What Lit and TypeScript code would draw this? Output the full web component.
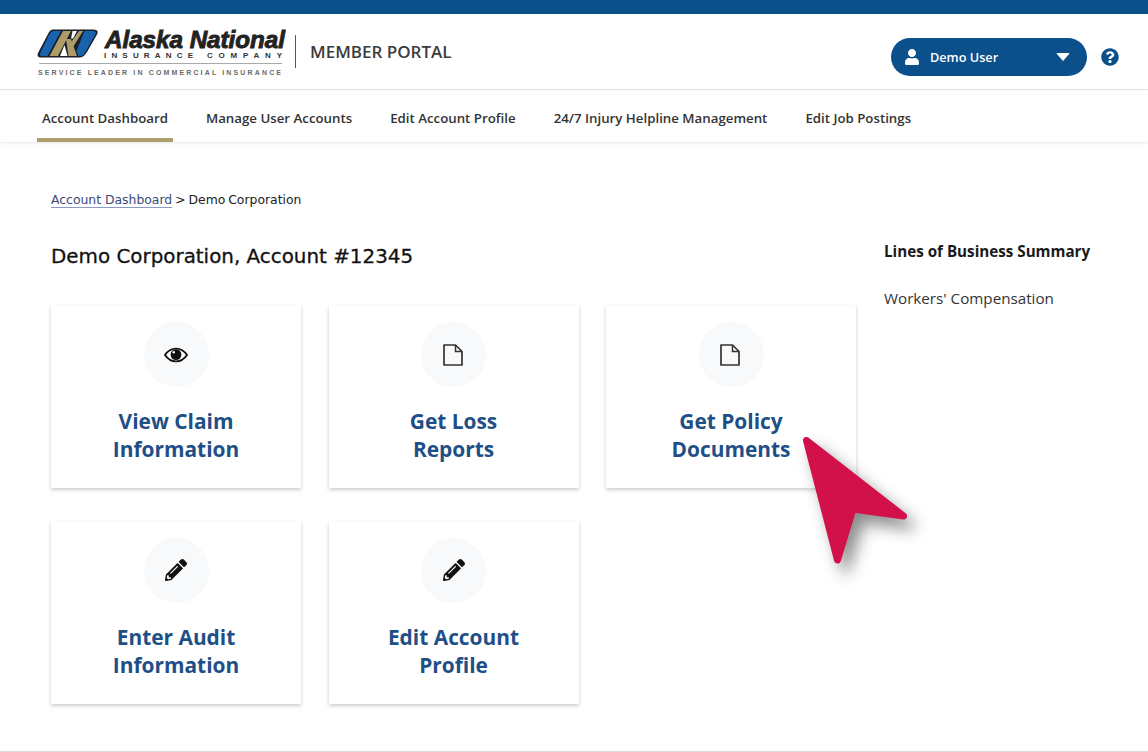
import { LitElement, html, css, svg } from "lit";
import { customElement } from "lit/decorators.js";

const pencil = svg`<path d="M497.9 142.1l-46.1 46.1c-4.7 4.7-12.3 4.7-17 0l-111-111c-4.7-4.7-4.7-12.3 0-17l46.1-46.1c18.7-18.7 49.1-18.7 67.9 0l60.1 60.1c18.8 18.7 18.8 49.1 0 67.9zM284.2 99.8L21.6 362.4.4 483.9c-2.9 16.4 11.4 30.6 27.8 27.8l121.5-21.3 262.6-262.6c4.7-4.7 4.7-12.3 0-17l-111-111c-4.8-4.7-12.4-4.7-17.1 0zM124.1 339.9c-5.5-5.5-5.5-14.3 0-19.8l154-154c5.5-5.5 14.3-5.5 19.8 0s5.5 14.3 0 19.8l-154 154c-5.5 5.5-14.3 5.5-19.8 0zM88 424h48v36.3l-64.5 11.3-31.1-31.1L51.7 376H88v48z" fill="#111"/>`;

const icons: Record<string, unknown> = {
  eye: html`<svg class="ic" width="24" height="16" viewBox="0 0 24 16">
    <path d="M1 8C4 3.6 7.8 1.6 12 1.6S20 3.6 23 8c-3 4.4-6.8 6.4-11 6.4S4 12.4 1 8Z" fill="#fff" stroke="#111" stroke-width="1.9"/>
    <circle cx="12" cy="7.6" r="5.4" fill="#111"/>
    <circle cx="9.8" cy="5.2" r="1.2" fill="#fff"/>
  </svg>`,
  doc: html`<svg class="ic doc" width="20" height="22" viewBox="0 0 20 22">
    <path d="M1 1h11.5L19 7.5V21H1Z" fill="none" stroke="#333" stroke-width="1.7" stroke-linejoin="round"/>
    <path d="M12.5 1v6.5H19" fill="none" stroke="#333" stroke-width="1.5"/>
  </svg>`,
  pencil: html`<svg class="ic" width="22" height="22" viewBox="0 0 512 512">${pencil}</svg>`,
};

const cards = [
  { icon: "eye", lines: ["View Claim", "Information"] },
  { icon: "doc", lines: ["Get Loss", "Reports"] },
  { icon: "doc", lines: ["Get Policy", "Documents"] },
  { icon: "pencil", lines: ["Enter Audit", "Information"] },
  { icon: "pencil", lines: ["Edit Account", "Profile"] },
];

const navItems = [
  "Account Dashboard",
  "Manage User Accounts",
  "Edit Account Profile",
  "24/7 Injury Helpline Management",
  "Edit Job Postings",
];

@customElement("app-root")
export class AppRoot extends LitElement {
  static styles = css`
    :host {
      display: block;
      position: relative;
      width: 1148px;
      height: 752px;
      overflow: hidden;
      background: #fff;
      font-family: "Open Sans", sans-serif;
      color: #222;
    }
    .page { height: 751px; border-bottom: 1px solid #dcdcdc; display: flex; flex-direction: column; }
    .topbar { height: 14px; background: #0b4f8b; flex: none; }
    .header {
      height: 75px; flex: none; display: flex; align-items: center;
      padding: 0 29px 0 37px; border-bottom: 1px solid #e9e9e9;
      box-shadow: 0 1px 2px rgba(0,0,0,.04);
    }
    .logo { display: block; flex: none; }
    .divider { width: 1px; height: 33px; background: #555; margin: 0 14px 0 9px; flex: none; }
    .portal { font-size: 17px; font-weight: 600; color: #3c3c3c; flex: 1; }
    .right { display: flex; align-items: center; padding-top: 10px; flex: none; }
    .user {
      width: 196px; height: 38px; border-radius: 19px; background: #0b4f8b; color: #fff;
      display: flex; align-items: center; padding: 0 17px 0 14px; box-sizing: border-box;
      font-size: 12.7px; font-weight: 600; margin-right: 14px;
    }
    .user .name { margin-left: 11px; flex: 1; }
    .help { display: block; flex: none; }
    .nav {
      height: 52px; flex: none; display: flex; gap: 28px; padding-left: 37px;
      box-shadow: 0 1px 3px rgba(0,0,0,.1); box-sizing: border-box;
    }
    .nav a {
      padding: 19px 5px 0; box-sizing: border-box; height: 52px; font-size: 13.28px; font-weight: 600; color: #333;
      white-space: nowrap; line-height: 18px; border-bottom: 4px solid transparent;
    }
    .nav a.on { border-bottom-color: #ae9f6f; }
    .main { flex: 1; display: flex; padding: 49px 0 0 51px; }
    .left { width: 805px; flex: none; }
    .crumb { font-family: "DejaVu Sans", sans-serif; font-size: 12.4px; line-height: 18px; color: #222; word-spacing: -1px; }
    .crumb a { color: #3b4a78; border-bottom: 1px solid #8d9ac0; word-spacing: 0; }
    h1 {
      margin: 34px 0 0; font-family: "DejaVu Sans", sans-serif; font-weight: 400; font-size: 19.9px;
      line-height: 28px; color: #111; -webkit-text-stroke: .3px #111;
    }
    .grid {
      display: grid; grid-template-columns: repeat(3, 250px); column-gap: 27.5px; row-gap: 32.5px; margin-top: 34px;
    }
    .card {
      height: 183px; box-sizing: border-box; background: #fff; padding-top: 17px;
      box-shadow: 0 2px 4px rgba(0,0,0,.2); display: flex; flex-direction: column; align-items: center;
    }
    .circle {
      width: 65px; height: 65px; border-radius: 50%; background: #f7f9fb;
      display: flex; align-items: center; justify-content: center; flex: none;
    }
    .ic { display: block; }
    .ic.doc { margin-right: 2px; }
    .title {
      margin-top: 20px; text-align: center; font-size: 20.9px; line-height: 28px; font-weight: 700; color: #1e4f86;
    }
    .side { padding: 50px 0 0 28px; width: 230px; }
    .side h2 { margin: 0; font-size: 15.2px; font-weight: 700; line-height: 20px; color: #1a1a1a; white-space: nowrap; }
    .side p { margin: 27px 0 0; font-size: 15.2px; line-height: 20px; color: #333; white-space: nowrap; }
    .cursor { position: absolute; left: 780px; top: 415px; pointer-events: none; overflow: visible; filter: drop-shadow(8px 10px 8px rgba(0,0,0,.45)); }
  `;

  render() {
    return html`
      <div class="page">
        <div class="topbar"></div>
        <header class="header">
          ${this.logo()}
          <div class="divider"></div>
          <div class="portal">MEMBER PORTAL</div>
          <div class="right">
            <div class="user">
              <svg width="14" height="16" viewBox="0 0 448 512"><path fill="#fff" d="M224 256c70.7 0 128-57.3 128-128S294.7 0 224 0 96 57.3 96 128s57.3 128 128 128zm89.6 32h-16.7c-22.2 10.2-46.9 16-72.9 16s-50.6-5.8-72.9-16h-16.7C60.2 288 0 348.2 0 422.4V464c0 26.5 21.5 48 48 48h352c26.5 0 48-21.5 48-48v-41.6c0-74.2-60.2-134.4-134.4-134.4z"/></svg>
              <span class="name">Demo User</span>
              <svg width="14" height="8" viewBox="0 0 14 8"><path d="M1 0.5h12L7 7.5Z" fill="#fff" stroke="#fff" stroke-linejoin="round"/></svg>
            </div>
            <svg class="help" width="18" height="18" viewBox="0 0 512 512"><path fill="#0b4f8b" d="M504 256c0 136.997-111.043 248-248 248S8 392.997 8 256C8 119.083 119.043 8 256 8s248 111.083 248 248zM262.655 90c-54.497 0-89.255 22.957-116.549 63.758-3.536 5.286-2.353 12.415 2.715 16.258l34.699 26.31c5.205 3.947 12.621 3.008 16.665-2.122 17.864-22.658 30.113-35.797 57.303-35.797 20.429 0 45.698 13.148 45.698 32.958 0 14.976-12.363 22.667-32.534 33.976C247.128 238.528 216 254.941 216 296v4c0 6.627 5.373 12 12 12h56c6.627 0 12-5.373 12-12v-1.333c0-28.462 83.186-29.647 83.186-106.667 0-58.002-60.165-102-116.531-102zM256 338c-25.365 0-46 20.635-46 46 0 25.364 20.635 46 46 46s46-20.636 46-46c0-25.365-20.635-46-46-46z"/></svg>
          </div>
        </header>
        <nav class="nav">
          ${navItems.map((n, i) => html`<a class=${i === 0 ? "on" : ""}>${n}</a>`)}
        </nav>
        <div class="main">
          <div class="left">
            <div class="crumb"><a>Account Dashboard</a> &gt; Demo Corporation</div>
            <h1>Demo Corporation, Account #12345</h1>
            <div class="grid">
              ${cards.map(
                (c) => html`<div class="card">
                  <div class="circle">${icons[c.icon]}</div>
                  <div class="title">${c.lines[0]}<br />${c.lines[1]}</div>
                </div>`
              )}
            </div>
          </div>
          <aside class="side">
            <h2>Lines of Business Summary</h2>
            <p>Workers' Compensation</p>
          </aside>
        </div>
      </div>
      <svg class="cursor" width="140" height="160" viewBox="780 415 140 160">
        <path d="M806.5 440.5 L903.5 516 L853 509 L837.5 560 Z" fill="#d2114a" stroke="#d2114a" stroke-width="7" stroke-linejoin="round"/>
      </svg>
    `;
  }

  logo() {
    return html`<svg class="logo" width="249" height="50" viewBox="37 26 249 50">
      <path d="M53 28.5 H93 Q99.5 28.5 97 33.5 L87 51 Q84 56.5 79 56.5 H42 Q35.5 56.5 38.5 51 L48 33 Q50 28.5 53 28.5Z" fill="#1b1f2a"/>
      <path d="M53.5 30 H61 L47.5 55 H42.5 Q38.5 55 40.5 51.5 L49.5 33 Q51 30 53.5 30Z" fill="#1763ad"/>
      <path d="M63 30 H71 L58 55 H49.5Z" fill="#ad9b68"/>
      <path d="M66 38 L71 38 L77 55 H68.5Z" fill="#ad9b68"/>
      <path d="M60 55 L64.5 44 L67.5 55Z" fill="#fff"/>
      <path d="M72.5 30 H77 L73 37.5 H71Z" fill="#fff"/>
      <path d="M79 30 H83 L72.5 47 L70.5 42Z" fill="#ad9b68"/>
      <path d="M84.5 30 H93 Q97 30 95.5 33 L85.5 51 Q83.5 55 80 55 H78.5 L76.5 50Z" fill="#1763ad"/>
      <text x="105" y="46.5" textLength="180" lengthAdjust="spacingAndGlyphs" font-family="Liberation Sans" font-style="italic" font-weight="700" font-size="24" fill="#222" stroke="#222" stroke-width=".9">Alaska National</text>
      <text x="104" y="57" textLength="89" font-family="Liberation Sans" font-weight="700" font-size="8" fill="#333">INSURANCE</text>
      <text x="207" y="57" textLength="75" font-family="Liberation Sans" font-weight="700" font-size="8" fill="#333">COMPANY</text>
      <rect x="39" y="62" width="243" height="1" fill="#aaa"/>
      <text x="38" y="74" textLength="243" font-family="Liberation Sans" font-weight="700" font-size="7" fill="#6a6a6a">SERVICE LEADER IN COMMERCIAL INSURANCE</text>
    </svg>`;
  }
}
